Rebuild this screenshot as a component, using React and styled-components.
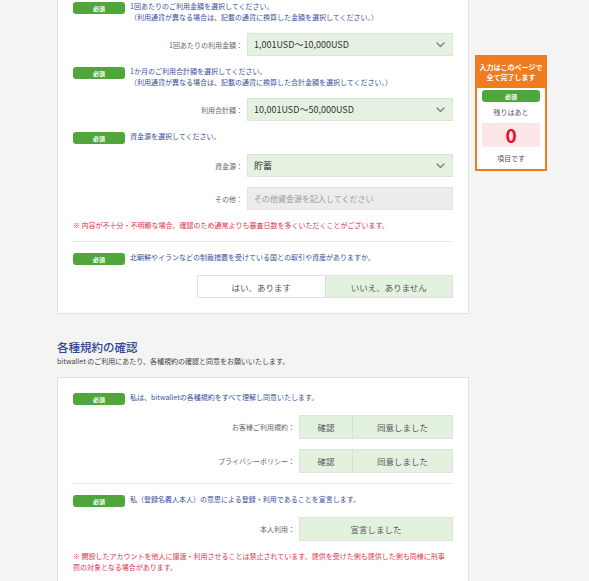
import React from 'react';
import styled, { createGlobalStyle } from 'styled-components';

const GlobalStyle = createGlobalStyle`
  html, body {
    margin: 0;
    padding: 0;
    background: #f4f4f4;
  }
  body {
    font-family: "Noto Sans CJK JP", "Noto Sans", sans-serif;
    color: #444;
    overflow: hidden;
  }
`;

const Page = styled.div`
  display: flex;
  align-items: flex-start;
  gap: 6px;
  padding-left: 57px;
`;

const Main = styled.div`
  width: 412px;
  display: flex;
  flex-direction: column;
`;

const Panel = styled.div`
  background: #fff;
  border: 1px solid #e3e3e3;
  padding: 14px 15px ${p => p.$bottom}px;
  margin-top: ${p => p.$top}px;
  display: flex;
  flex-direction: column;
  gap: 10px;
`;

const Question = styled.div`
  display: flex;
  align-items: flex-start;
  gap: 5px;
`;

const Badge = styled.span`
  flex: none;
  width: ${p => p.$wide ? '100%' : '52px'};
  height: 12px;
  margin-top: ${p => p.$wide ? 0 : 1}px;
  border-radius: 3px;
  background: #4fa73c;
  color: #fff;
  font-size: 6px;
  font-weight: 700;
  display: flex;
  align-items: center;
  justify-content: center;
`;

const QText = styled.p`
  margin: 0;
  font-size: 7px;
  line-height: 11px;
  color: #3b4f9c;
`;

const Note = styled.p`
  margin: 0;
  font-size: 7px;
  line-height: 11px;
  color: #e2334f;
  white-space: nowrap;
`;

const FieldRow = styled.div`
  display: flex;
  justify-content: flex-end;
  align-items: center;
  gap: 4px;
`;

const Label = styled.span`
  font-size: 7px;
  color: #666;
`;

const Select = styled.div`
  width: 206px;
  height: 23px;
  box-sizing: border-box;
  background: #e5f2e1;
  border: 1px solid #d8e7d4;
  display: flex;
  align-items: center;
  justify-content: space-between;
  padding: 0 7px 0 6px;
  font-size: 9px;
  color: #333;
`;

const Input = styled.div`
  width: 206px;
  height: 23px;
  box-sizing: border-box;
  background: #ececec;
  border: 1px solid #e2e2e2;
  display: flex;
  align-items: center;
  padding: 0 6px;
  font-size: 8px;
  color: #999;
`;

const Choice = styled.div`
  width: ${p => p.$width}px;
  height: ${p => p.$height}px;
  box-sizing: border-box;
  display: flex;
  border: 1px solid #e1e1e1;
`;

const Option = styled.div`
  flex: ${p => p.$fixed ? `0 0 ${p.$fixed}px` : 1};
  display: flex;
  align-items: center;
  justify-content: center;
  font-size: 8.5px;
  color: #555;
  background: ${p => p.$active ? '#e3f1df' : '#fff'};
  & + & {
    border-left: 1px solid ${p => p.$active ? '#d3e4cf' : '#e1e1e1'};
  }
`;

const Divider = styled.hr`
  margin: 0;
  border: 0;
  border-top: 1px solid #e6e6e6;
`;

const SectionTitle = styled.h2`
  margin: 24px 0 0;
  font-size: 11.5px;
  line-height: 18px;
  font-weight: 500;
  color: #2f4893;
`;

const SectionLead = styled.p`
  margin: 0;
  font-size: 7px;
  line-height: 11px;
  color: #444;
`;

const Side = styled.aside`
  flex: none;
  width: 72px;
  margin-top: 55px;
  box-sizing: border-box;
  border: 2px solid #f07c1f;
  background: #fff;
`;

const SideHead = styled.div`
  background: #f07c1f;
  color: #fff;
  font-size: 7px;
  font-weight: 700;
  line-height: 9.5px;
  text-align: center;
  padding: 6px 0;
`;

const SideBody = styled.div`
  padding: 2px 5px 5px;
  display: flex;
  flex-direction: column;
  align-items: center;
`;

const SideText = styled.div`
  margin-top: ${p => p.$gap}px;
  font-size: 7px;
  line-height: 12px;
  color: #555;
`;

const Count = styled.div`
  width: 100%;
  height: 24px;
  margin-top: 5px;
  background: #fde6e6;
  color: #e60f2e;
  font-size: 19px;
  font-weight: 700;
  line-height: 24px;
  text-align: center;
`;

const Chevron = () => (
  <svg width="9" height="6" viewBox="0 0 9 6">
    <path d="M1 1l3.5 3.5L8 1" fill="none" stroke="#8a8a8a" strokeWidth="1.6" strokeLinecap="round" strokeLinejoin="round" />
  </svg>
);

const Req = ({ children }) => (
  <Question>
    <Badge>必須</Badge>
    <QText>{children}</QText>
  </Question>
);

const SelectRow = ({ label, value }) => (
  <FieldRow>
    <Label>{label}</Label>
    <Select>
      <span>{value}</span>
      <Chevron />
    </Select>
  </FieldRow>
);

const AgreeRow = ({ label, check }) => (
  <FieldRow>
    <Label>{label}</Label>
    <Choice $width={154} $height={24}>
      {check && <Option $active $fixed={52}>確認</Option>}
      <Option $active>{check ? '同意しました' : '宣言しました'}</Option>
    </Choice>
  </FieldRow>
);

export default function App() {
  return (
    <>
      <GlobalStyle />
      <Page>
        <Main>
          <Panel $top={-14} $bottom={15}>
            <Req>
              1回あたりのご利用金額を選択してください。<br />
              （利用通貨が異なる場合は、記載の通貨に換算した金額を選択してください。）
            </Req>
            <SelectRow label="1回あたりの利用金額：" value="1,001USD〜10,000USD" />
            <Req>
              1か月のご利用合計額を選択してください。<br />
              （利用通貨が異なる場合は、記載の通貨に換算した合計金額を選択してください。）
            </Req>
            <SelectRow label="利用合計額：" value="10,001USD〜50,000USD" />
            <Req>資金源を選択してください。</Req>
            <SelectRow label="資金源：" value="貯蓄" />
            <FieldRow>
              <Label>その他：</Label>
              <Input>その他資金源を記入してください</Input>
            </FieldRow>
            <Note>※ 内容が不十分・不明瞭な場合、確認のため通常よりも審査日数を多くいただくことがございます。</Note>
            <Divider />
            <Req>北朝鮮やイランなどの制裁措置を受けている国との取引や資産がありますか。</Req>
            <FieldRow>
              <Choice $width={256} $height={23}>
                <Option>はい、あります</Option>
                <Option $active>いいえ、ありません</Option>
              </Choice>
            </FieldRow>
          </Panel>

          <SectionTitle>各種規約の確認</SectionTitle>
          <SectionLead>bitwallet のご利用にあたり、各種規約の確認と同意をお願いいたします。</SectionLead>

          <Panel $top={10} $bottom={20}>
            <Req>私は、bitwalletの各種規約をすべて理解し同意いたします。</Req>
            <AgreeRow label="お客様ご利用規約：" check />
            <AgreeRow label="プライバシーポリシー：" check />
            <Divider />
            <Req>私（登録名義人本人）の意思による登録・利用であることを宣言します。</Req>
            <AgreeRow label="本人利用：" />
            <Note>
              ※ 開設したアカウントを他人に譲渡・利用させることは禁止されています。提供を受けた側も提供した側も同様に刑事<br />
              罰の対象となる場合があります。
            </Note>
          </Panel>
        </Main>

        <Side>
          <SideHead>
            入力はこのページで<br />
            全て完了します
          </SideHead>
          <SideBody>
            <Badge $wide>必須</Badge>
            <SideText $gap={4}>残りはあと</SideText>
            <Count>0</Count>
            <SideText $gap={5}>項目です</SideText>
          </SideBody>
        </Side>
      </Page>
    </>
  );
}
